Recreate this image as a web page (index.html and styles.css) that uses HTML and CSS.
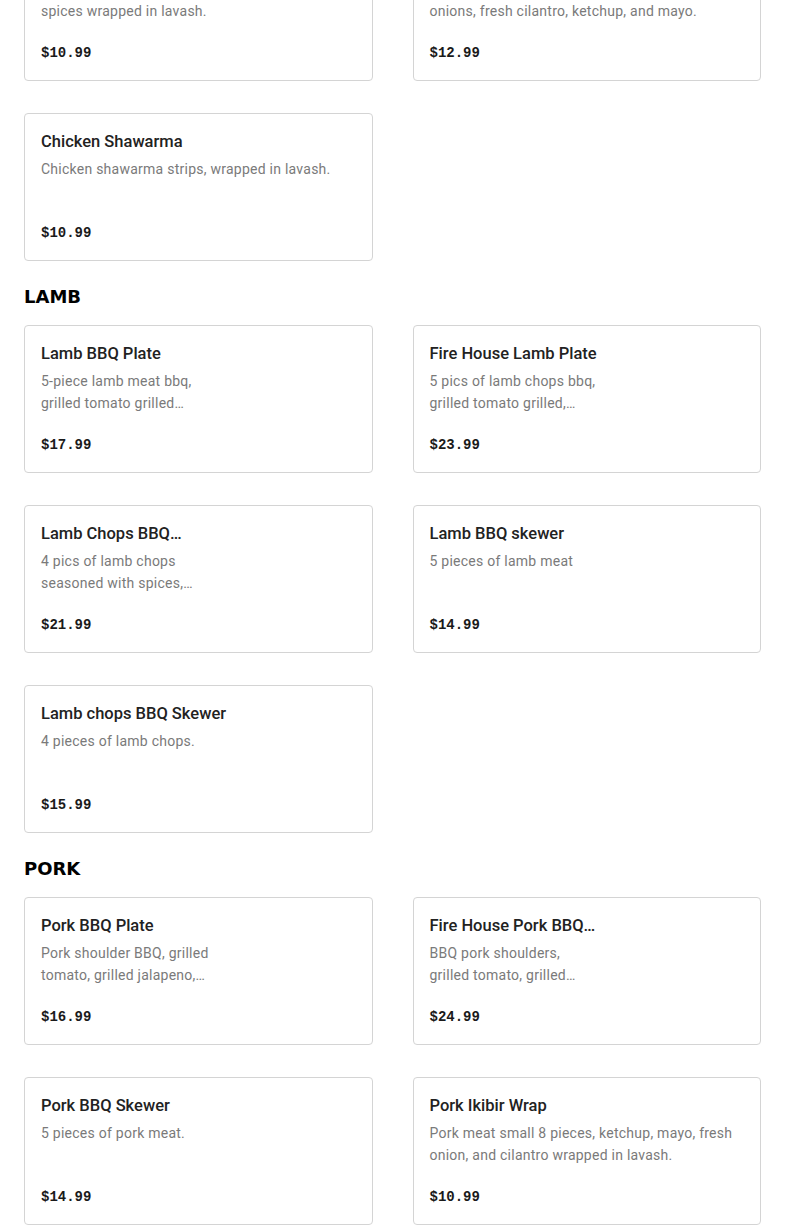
FILE: index.html
```html
<!DOCTYPE html>
<html lang="en">
<head>
<meta charset="utf-8">
<title>Menu</title>
<link rel="stylesheet" href="styles.css">
</head>
<body>
<main class="menu">
  <section class="section">
    <div class="grid">
      <div class="card">
        <div class="title">Beef Kebab Wrap</div>
        <div class="desc">Ground beef kebab seasoned with herbs and<br>spices wrapped in lavash.</div>
        <div class="price">$10.99</div>
      </div>
      <div class="card">
        <div class="title">Fire House Wrap</div>
        <div class="desc">Chicken barbecue pieces, grilled tomato,<br>onions, fresh cilantro, ketchup, and mayo.</div>
        <div class="price">$12.99</div>
      </div>
      <div class="card">
        <div class="title">Chicken Shawarma</div>
        <div class="desc">Chicken shawarma strips, wrapped in lavash.</div>
        <div class="price">$10.99</div>
      </div>
    </div>
  </section>

  <section class="section">
    <h2 class="heading">LAMB</h2>
    <div class="grid">
      <div class="card">
        <div class="title">Lamb BBQ Plate</div>
        <div class="desc">5-piece lamb meat bbq,<br>grilled tomato grilled…</div>
        <div class="price">$17.99</div>
      </div>
      <div class="card">
        <div class="title">Fire House Lamb Plate</div>
        <div class="desc">5 pics of lamb chops bbq,<br>grilled tomato grilled,…</div>
        <div class="price">$23.99</div>
      </div>
      <div class="card">
        <div class="title">Lamb Chops BBQ…</div>
        <div class="desc">4 pics of lamb chops<br>seasoned with spices,…</div>
        <div class="price">$21.99</div>
      </div>
      <div class="card">
        <div class="title">Lamb BBQ skewer</div>
        <div class="desc">5 pieces of lamb meat</div>
        <div class="price">$14.99</div>
      </div>
      <div class="card">
        <div class="title">Lamb chops BBQ Skewer</div>
        <div class="desc">4 pieces of lamb chops.</div>
        <div class="price">$15.99</div>
      </div>
    </div>
  </section>

  <section class="section">
    <h2 class="heading">PORK</h2>
    <div class="grid">
      <div class="card">
        <div class="title">Pork BBQ Plate</div>
        <div class="desc">Pork shoulder BBQ, grilled<br>tomato, grilled jalapeno,…</div>
        <div class="price">$16.99</div>
      </div>
      <div class="card">
        <div class="title">Fire House Pork BBQ…</div>
        <div class="desc">BBQ pork shoulders,<br>grilled tomato, grilled…</div>
        <div class="price">$24.99</div>
      </div>
      <div class="card">
        <div class="title">Pork BBQ Skewer</div>
        <div class="desc">5 pieces of pork meat.</div>
        <div class="price">$14.99</div>
      </div>
      <div class="card">
        <div class="title">Pork Ikibir Wrap</div>
        <div class="desc">Pork meat small 8 pieces, ketchup, mayo, fresh<br>onion, and cilantro wrapped in lavash.</div>
        <div class="price">$10.99</div>
      </div>
    </div>
  </section>
</main>
</body>
</html>
```

FILE: styles.css
```css
html, body {
  margin: 0;
  padding: 0;
  background: #ffffff;
}

body {
  font-family: Roboto, "Liberation Sans", sans-serif;
  color: #1f1f1f;
}

.menu {
  padding: 0 24px;
  margin-top: -67px;
  display: flex;
  flex-direction: column;
  gap: 24px;
}

.heading {
  margin: 0 0 16px 0;
  font-family: "DejaVu Sans", "Liberation Sans", sans-serif;
  font-weight: 700;
  font-size: 18px;
  line-height: 24px;
  color: #000;
}

.grid {
  display: grid;
  grid-template-columns: 1fr 1fr;
  column-gap: 40px;
  row-gap: 32px;
}

.card {
  border: 1px solid #d4d4d4;
  border-radius: 4px;
  padding: 16px;
  display: flex;
  flex-direction: column;
}

.title {
  font-size: 16.5px;
  font-weight: 500;
  line-height: 24px;
  color: #222;
  white-space: nowrap;
}

.desc {
  margin-top: 4px;
  font-size: 14px;
  line-height: 22px;
  letter-spacing: 0.25px;
  height: 44px;
  color: #7a7a7a;
}

.price {
  margin-top: 20px;
  font-family: "Liberation Mono", "DejaVu Sans Mono", monospace;
  font-weight: 700;
  font-size: 14px;
  line-height: 22px;
  color: #1a1a1a;
}
```
